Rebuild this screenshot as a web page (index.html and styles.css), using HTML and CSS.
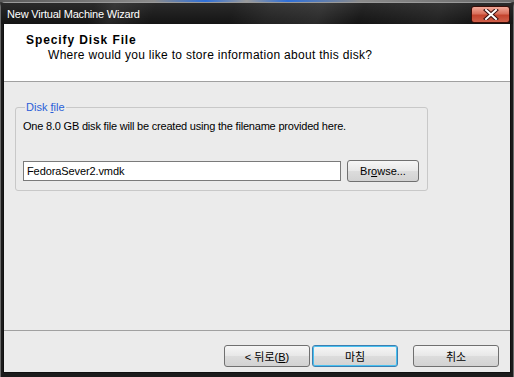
FILE: index.html
```html
<!DOCTYPE html>
<html lang="en">
<head>
    <meta charset="UTF-8">
    <title>New Virtual Machine Wizard</title>
    <link rel="stylesheet" href="styles.css">
</head>
<body>
    <div class="desk-strip"></div>
    <div class="window">
        <div class="titlebar">
            <span class="title">New Virtual Machine Wizard</span>
            <button class="close-btn" aria-label="Close">
                <svg width="16" height="11" viewBox="0 0 16 11">
                    <path d="M3 1 L13 10 M13 1 L3 10" stroke="#3a1010" stroke-width="4" stroke-linecap="square"/>
                    <path d="M3 1 L13 10 M13 1 L3 10" stroke="#ffffff" stroke-width="2" stroke-linecap="square"/>
                </svg>
            </button>
        </div>

        <div class="client">
            <div class="header">
                <h1>Specify Disk File</h1>
                <p>Where would you like to store information about this disk?</p>
            </div>

            <div class="main">
                <fieldset class="group">
                    <legend>Disk <u>f</u>ile</legend>
                    <p class="info">One 8.0 GB disk file will be created using the filename provided here.</p>
                    <div class="file-row">
                        <input type="text" class="file-input" value="FedoraSever2.vmdk">
                        <button class="btn btn-browse">Br<u>o</u>wse...</button>
                    </div>
                </fieldset>
            </div>

            <div class="footer">
                <button class="btn btn-nav">&lt; 뒤로(<u>B</u>)</button>
                <button class="btn btn-nav btn-default">마침</button>
                <button class="btn btn-nav btn-cancel">취소</button>
            </div>
        </div>
    </div>
</body>
</html>
```

FILE: styles.css
```css
html, body {
    margin: 0;
    padding: 0;
}
body {
    width: 514px;
    height: 377px;
    overflow: hidden;
    background: #3a3a3a;
    font-family: "Liberation Sans", Arial, "Noto Sans CJK KR", sans-serif;
    font-size: 11px;
    color: #000;
}
.desk-strip {
    height: 2px;
    background: linear-gradient(90deg, #5a5a5a 0%, #8a8a8a 30%, #2e6fd8 40%, #9a9a9a 48%, #2e6fd8 56%, #8a8a8a 70%, #6a6a6a 100%);
}
.window {
    height: 375px;
    box-sizing: border-box;
    background: #1b1b1b;
    border-top: 1px solid #9a9a9a;
    border-left: 1px solid #6a6a6a;
    border-right: 1px solid #6a6a6a;
    border-radius: 5px 5px 0 0;
    display: flex;
    flex-direction: column;
}
.titlebar {
    height: 21px;
    flex-shrink: 0;
    display: flex;
    align-items: center;
    justify-content: space-between;
    padding: 0 3px 0 6px;
    background:
        linear-gradient(110deg, transparent 0%, transparent 18%, rgba(255,255,255,0.07) 22%, transparent 30%, transparent 45%, rgba(255,255,255,0.06) 52%, rgba(255,255,255,0.09) 62%, transparent 70%, rgba(255,255,255,0.05) 85%, transparent 92%),
        linear-gradient(180deg, #2a2a2a, #141414);
}
.title {
    color: #fff;
    font-size: 11px;
    letter-spacing: -0.2px;
}
.close-btn {
    width: 39px;
    height: 17px;
    margin-top: 2px;
    padding: 0;
    border: 1px solid #3a0e08;
    border-radius: 3px;
    background: linear-gradient(180deg, #f2a999 0%, #d9705c 45%, #c4442e 55%, #d0604a 100%);
    display: flex;
    align-items: center;
    justify-content: center;
}
.client {
    flex: 1;
    margin: 0 2px 4px 2px;
    background: #ebebeb;
    border: 1px solid #101010;
    border-top: none;
    display: flex;
    flex-direction: column;
}
.header {
    height: 58px;
    flex-shrink: 0;
    box-sizing: border-box;
    background: #fff;
    border-bottom: 1px solid #a0a0a0;
    padding: 9px 0 0 22px;
}
.header h1 {
    margin: 0;
    font-size: 12px;
    font-weight: bold;
    letter-spacing: 0.9px;
    line-height: 15px;
}
.header p {
    margin: 0;
    padding-left: 22px;
    font-size: 12px;
    letter-spacing: 0.3px;
    line-height: 15px;
}
.main {
    flex: 1;
    padding: 18px 0 0 11px;
    border-bottom: 1px solid #a0a0a0;
}
.group {
    width: 413px;
    height: 91px;
    box-sizing: border-box;
    margin: 0;
    padding: 5px 7px 0 7px;
    border: 1px solid #c8c8c8;
    border-radius: 3px;
}
.group legend {
    color: #2a5fd8;
    padding: 0 1px;
    margin-left: 2px;
    line-height: 14px;
}
.info {
    margin: 0;
    letter-spacing: -0.2px;
    line-height: 14px;
}
.file-row {
    display: flex;
    align-items: center;
    margin-top: 27px;
}
.file-input {
    width: 318px;
    height: 20px;
    box-sizing: border-box;
    border: 1px solid #7a7a7a;
    padding: 0 3px;
    font-family: inherit;
    font-size: 11px;
    letter-spacing: -0.1px;
    margin: 0;
}
.btn {
    font-family: inherit;
    font-size: 11px;
    color: #000;
    border: 1px solid #707070;
    border-radius: 3px;
    background: linear-gradient(180deg, #f6f6f6 0%, #e8e8e8 48%, #dcdcdc 52%, #d2d2d2 100%);
    padding: 0;
    margin: 0;
}
.btn-browse {
    width: 72px;
    height: 22px;
    margin-left: 6px;
}
.footer {
    height: 41px;
    flex-shrink: 0;
    box-sizing: border-box;
    display: flex;
    align-items: flex-start;
    padding: 14px 0 0 220px;
}
.btn-nav {
    width: 86px;
    height: 22px;
    font-family: "Liberation Sans", "Noto Sans CJK KR", sans-serif;
}
.btn-default {
    margin-left: 2px;
    border-color: #3c7fb1;
    box-shadow: inset 0 0 0 1px #48c0f0;
}
.btn-cancel {
    margin-left: 15px;
}
```
